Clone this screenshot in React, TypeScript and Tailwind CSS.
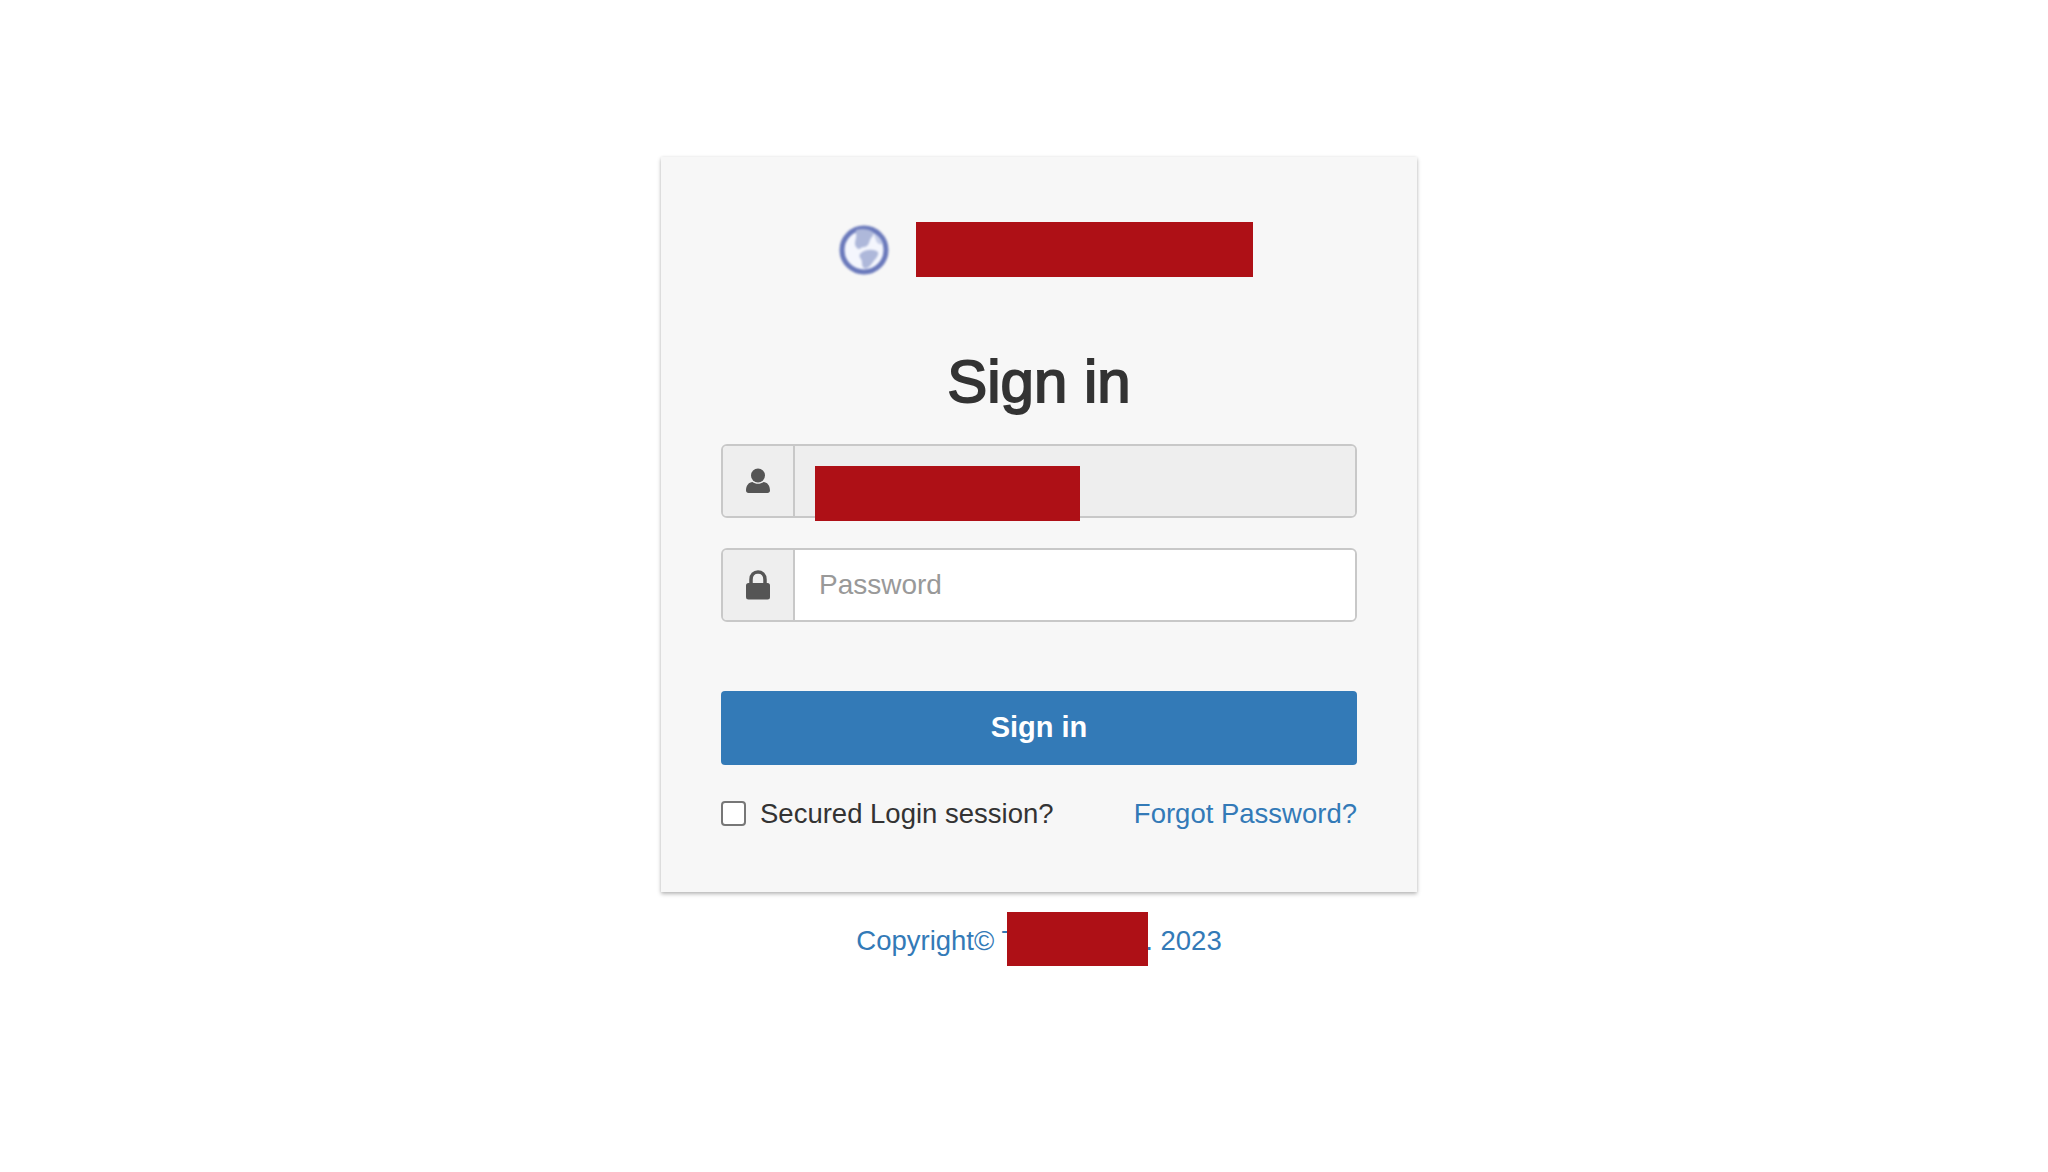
import React from 'react';

const UserIcon = () => (
  <svg width="26" height="26" viewBox="0 0 26 26" className="text-[#555]" fill="currentColor" aria-hidden="true">
    <circle cx="13" cy="7.5" r="7" />
    <path d="M1 22.5c0-5 3-8.500 6.500-8.500 1.500 1.200 3.400 1.800 5.500 1.800s4-.6 5.500-1.800c3.500 0 6.500 3.500 6.500 8.500 0 1.600-1 2.500-2.500 2.500h-19C2 25 1 24.100 1 22.500z" />
  </svg>
);

const LockIcon = () => (
  <svg width="26" height="30" viewBox="0 0 26 30" className="text-[#555]" aria-hidden="true">
    <path d="M6 14V9.500C6 5 9 2 13 2s7 3 7 7.500V14" fill="none" stroke="currentColor" strokeWidth="3.500" />
    <rect x="1" y="13" width="24" height="16.500" rx="2.500" fill="currentColor" />
  </svg>
);

const GlobeLogo = () => (
  <svg width="50" height="50" viewBox="0 0 50 50" className="blur-[1px]" aria-hidden="true">
    <circle cx="25" cy="25" r="22" fill="#f4f6fd" stroke="#6a79bb" strokeWidth="5" />
    <path d="M17 5c6-2 13-1 17 2 2 3-2 5-3 8s-2 7-6 7-4 4-7 1-2-6-1-10-1-5 0-8z" fill="#aeb8da" />
    <path d="M22 28c5-4 13-4 17-1 1 4-3 7-5 10s-6 8-9 6-1-6-3-9-2-4 0-6z" fill="#aeb8da" />
    <path d="M36 9c4 2 7 6 8 10-3 1-6 0-7-4s-3-4-1-6z" fill="#c6cee8" />
  </svg>
);

export default function App() {
  return (
    <div className="min-h-[1172px] bg-white pt-[157px] pl-[661px] font-['Liberation_Sans',Arial,sans-serif] text-[#333]">
      <div className="w-[756px] bg-[#f7f7f7] px-[60px] pt-[65px] pb-[66px] shadow-[0_2px_4px_rgba(0,0,0,0.28),0_0_3px_rgba(0,0,0,0.06)]">
        <div className="flex h-[55px] items-center justify-center gap-[27px] pl-[13px]">
          <GlobeLogo />
          <div className="h-[55px] w-[337px] bg-[#ae1016]" />
        </div>

        <h1 className="mt-[70px] text-center text-[60px] leading-[70px] [-webkit-text-stroke:1.8px_#333]">Sign in</h1>

        <div className="relative mt-[27px] flex h-[74px] rounded-[6px] border-[2px] border-[#c8c8c8]">
          <div className="flex w-[72px] items-center justify-center rounded-l-[4px] border-r-[2px] border-[#c8c8c8] bg-[#eee]">
            <UserIcon />
          </div>
          <div className="flex-1 rounded-r-[4px] bg-[#eee]" />
          <div className="absolute top-[20px] left-[92px] h-[55px] w-[265px] bg-[#ae1016]" />
        </div>

        <div className="mt-[30px] flex h-[74px] rounded-[6px] border-[2px] border-[#c8c8c8]">
          <div className="flex w-[72px] items-center justify-center rounded-l-[4px] border-r-[2px] border-[#c8c8c8] bg-[#eee]">
            <LockIcon />
          </div>
          <input
            type="password"
            placeholder="Password"
            className="min-w-0 flex-1 rounded-r-[4px] bg-white px-[24px] text-[28px] outline-none placeholder:text-[#999]"
          />
        </div>

        <button className="mt-[69px] flex h-[74px] w-full items-center justify-center rounded-[4px] bg-[#337ab7] text-[29px] font-bold text-white">
          Sign in
        </button>

        <div className="mt-[36px] flex h-[25px] items-center justify-between text-[27.5px] leading-[25px]">
          <label className="flex items-center gap-[14px]">
            <span className="h-[25px] w-[25px] rounded-[4px] border-[2px] border-[#777] bg-white" />
            <span>Secured Login session?</span>
          </label>
          <a className="text-[#337ab7]">Forgot Password?</a>
        </div>
      </div>

      <div className="mt-[33px] w-[756px] text-center text-[27.5px] leading-[32px] text-[#337ab7]">
        Copyright© T
        <span className="relative inline-block h-[32px] w-[127px] align-top">
          <span className="absolute top-[-13px] left-[-11px] h-[54px] w-[141px] bg-[#ae1016]" />
        </span>
        . 2023
      </div>
    </div>
  );
}
